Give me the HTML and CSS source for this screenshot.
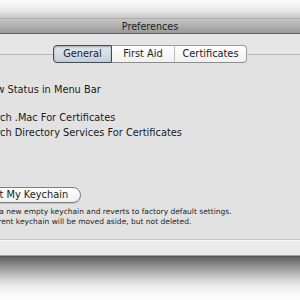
FILE: index.html
```html
<!DOCTYPE html>
<html>
<head>
<meta charset="utf-8">
<link rel="stylesheet" href="styles.css">
</head>
<body>
<div class="desktop">
  <div class="window">
    <div class="titlebar">Preferences</div>
    <div class="content">
      <div class="tabs">
        <div class="tab tab-general selected">General</div>
        <div class="tab tab-aid">First Aid</div>
        <div class="tab tab-certs">Certificates</div>
      </div>
      <div class="box">
        <div class="col">
          <div class="row row1"><span class="check"></span><span>Show Status in Menu Bar</span></div>
          <div class="row row2"><span class="check"></span><span>Search .Mac For Certificates</span></div>
          <div class="row"><span class="check"></span><span>Search Directory Services For Certificates</span></div>
          <div class="btn">Reset My Keychain</div>
          <div class="note">
            <div>Creates a new empty keychain and reverts to factory default settings.</div>
            <div>Your current keychain will be moved aside, but not deleted.</div>
          </div>
        </div>
      </div>
      <div class="footer"></div>
    </div>
  </div>
</div>
</body>
</html>
```
FILE: styles.css
```css
html, body {
  margin: 0;
  padding: 0;
}
body {
  width: 300px;
  height: 300px;
  overflow: hidden;
  background: #ffffff;
  font-family: "DejaVu Sans", "Liberation Sans", sans-serif;
}
.desktop {
  position: relative;
  width: 300px;
  height: 300px;
  overflow: hidden;
  background: #ffffff;
}
.window {
  position: absolute;
  left: -100px;
  top: 19px;
  width: 500px;
  height: 237px;
  display: flex;
  flex-direction: column;
  background: #e3e3e3;
  box-shadow: 0 2px 22px rgba(0, 0, 0, 0.45), 0 16px 26px rgba(0, 0, 0, 0.55), 0 0 1px rgba(0, 0, 0, 0.6);
}
.titlebar {
  height: 14px;
  border-bottom: 1px solid #5e5e5e;
  background: linear-gradient(#c4c4c4, #9a9a9a);
  color: #222222;
  font-size: 9.6px;
  line-height: 15px;
  text-align: center;
}
.content {
  flex: 1;
  display: flex;
  flex-direction: column;
  padding-top: 11px;
  background: #e5e5e5;
}
.tabs {
  display: flex;
  justify-content: center;
  position: relative;
  z-index: 2;
  height: 18px;
  margin-bottom: -9px;
}
.tab {
  box-sizing: border-box;
  height: 18px;
  font-size: 9.8px;
  line-height: 16px;
  text-align: center;
  color: #1c1c1c;
  background: linear-gradient(#ffffff, #f1f1f1);
  border-top: 1px solid #9c9c9c;
  border-bottom: 1px solid #8c8c8c;
  border-right: 1px solid #bdbdbd;
}
.tab-general {
  width: 59px;
  border-radius: 4px 0 0 4px;
}
.tab-aid {
  width: 63px;
}
.tab-certs {
  width: 72px;
  border-right: 1px solid #9c9c9c;
  border-radius: 0 4px 4px 0;
}
.tab.selected {
  background: linear-gradient(#e4e9ef, #c6cfd9);
  border: 1.5px solid #454b55;
  box-shadow: inset 0 1px 2px rgba(0, 0, 0, 0.3);
}
.box {
  margin: 0 20px;
  height: 186px;
  box-sizing: border-box;
  border-top: 1px solid #b9b9b9;
  border-bottom: 1px solid #c2c2c2;
  background: #e2e2e2;
}
.col {
  padding-left: 41px;
  padding-top: 27px;
  display: flex;
  flex-direction: column;
  align-items: flex-start;
}
.row {
  display: flex;
  align-items: center;
  gap: 5px;
  height: 15px;
  font-size: 9.8px;
  color: #1a1a1a;
}
.row2 {
  margin-top: 13px;
}
.check {
  width: 12px;
  height: 12px;
  box-sizing: border-box;
  border: 1px solid #8a8a8a;
  border-radius: 2px;
  background: linear-gradient(#ffffff, #ececec);
}
.btn {
  margin-top: 47px;
  margin-left: 2px;
  box-sizing: border-box;
  height: 16px;
  padding: 0 12px 0 12px;
  font-size: 9.8px;
  line-height: 14px;
  color: #1a1a1a;
  border: 1px solid #7f7f7f;
  border-radius: 8px;
  background: linear-gradient(#ffffff, #f0f0f0);
  box-shadow: 0 1px 1px rgba(0, 0, 0, 0.15);
}
.note {
  margin-top: 4px;
  margin-left: 7px;
  font-size: 7.5px;
  line-height: 10px;
  color: #262626;
}
.footer {
  flex: 1;
  background: #ebebeb;
  border-top: 1px solid #f7f7f7;
  border-bottom: 1px solid #a0a0a0;
}
```
